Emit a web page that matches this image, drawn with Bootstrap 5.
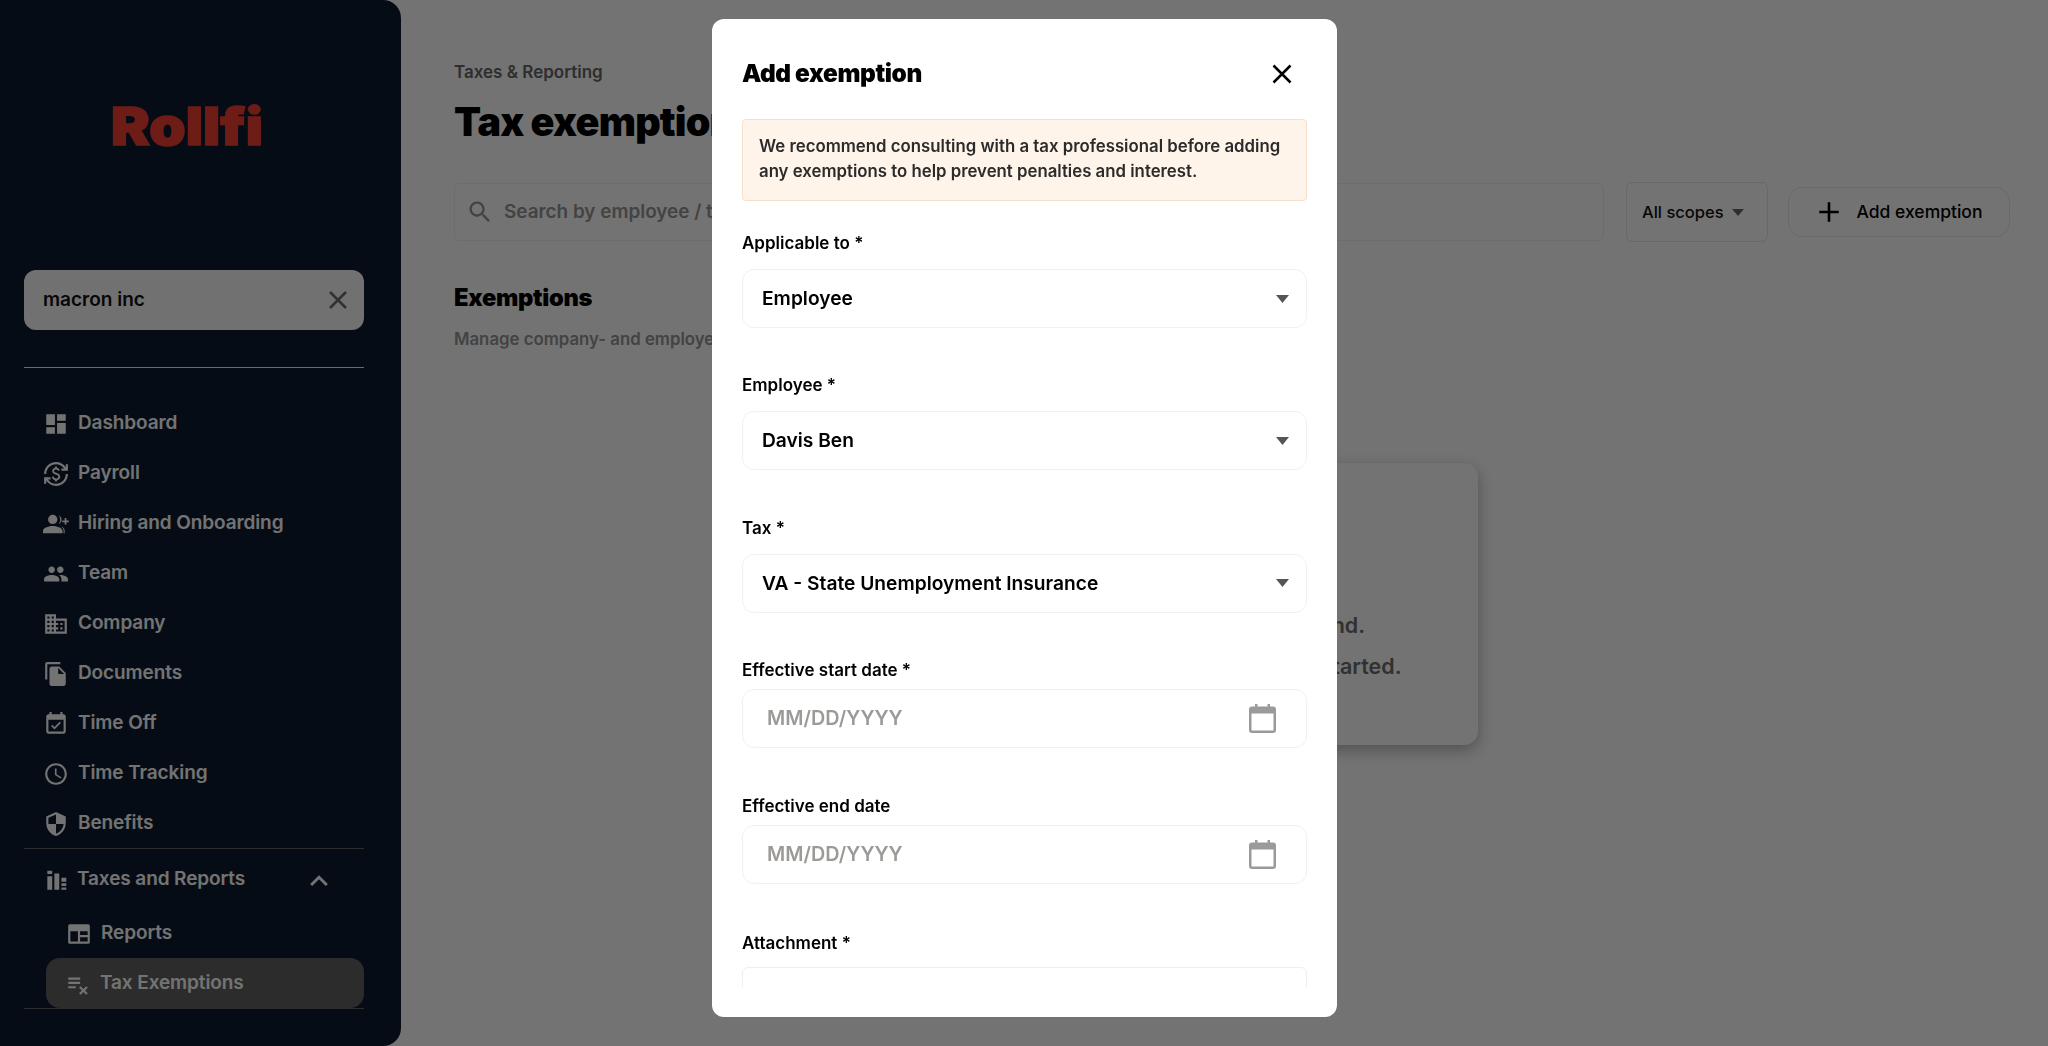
<!DOCTYPE html>
<html lang="en">
<head>
  <meta charset="UTF-8" />
  <title>Tax exemptions</title>
  <link href="https://cdn.jsdelivr.net/npm/bootstrap@5.3.0/dist/css/bootstrap.min.css" rel="stylesheet">
  <style>
    html, body { height: 100%; overflow: hidden; }
    body { font-family: Inter, "Liberation Sans", sans-serif; background: #fff; color: #000; }

    /* sidebar */
    .side-panel { width: 401px; height: 1046px; flex: none; background: #0f1c30; border-radius: 0 18px 18px 0; padding: 0 37px 0 24px; }
    .side-logo { height: 270px; padding: 96px 0 0 87px; }
    .side-logo svg { display: block; overflow: visible; }
    .company-box { height: 60px; background: #fbfbfb; border-radius: 12px; padding: 0 16px 0 19px; font-size: 19px; font-weight: 600; color: #111; }
    .side-rule { height: 1px; background: #ececec; margin: 37px 0 30px; }
    .side-link { height: 50px; padding-left: 20px; padding-top: 1px; gap: 9px; font-size: 19px; font-weight: 600; color: #fff; letter-spacing: -.1px; }
    .side-link svg { width: 26px; height: 26px; fill: #fff; flex: none; margin-left: -1px; }
    .side-split { border-top: 1px solid #626262; }
    .side-group { height: 60px; padding: 2px 32px 0 20px; }
    .side-sub { padding-left: 42px; gap: 9px; }
    .side-sub svg { margin-left: 0; }
    .side-active { background: #626262; border-radius: 14px; margin-left: 22px; padding-left: 20px; height: 50px; gap: 9px; }
    .side-end { border-top: 1px solid #626262; }

    /* page behind the dialog */
    .page-area { padding: 60px 38px 0 53px; min-width: 0; }
    .crumb { font-size: 17px; font-weight: 600; color: #666; line-height: 24px; }
    .page-title { font-size: 39.5px; font-weight: 900; line-height: 50px; margin: 13px 0 35px; letter-spacing: -.8px; }
    .search-box { height: 58px; border: 1px solid #f0f0f0; border-radius: 6px; padding-left: 11px; gap: 10px; font-size: 18.9px; font-weight: 600; color: #969696; }
    .search-box svg { width: 28px; height: 28px; fill: #969696; }
    .scope-box { width: 142px; height: 60px; border: 1px solid #e6e6e6; border-radius: 6px; margin-left: 22px; padding-left: 15px; gap: 8px; font-size: 16.5px; font-weight: 500; color: #111; }
    .add-btn { width: 222px; height: 50px; margin-left: 20px; border: 1px solid #e8e8e8; border-radius: 14px; gap: 15px; font-size: 17.5px; font-weight: 500; color: #000; background: #fff; padding: 0; }
    .add-btn svg { width: 26px; height: 26px; }
    .caret-down { width: 0; height: 0; border-left: 6px solid transparent; border-right: 6px solid transparent; border-top: 7px solid #666; }
    .section-title { font-size: 23.7px; font-weight: 900; line-height: 32px; margin: 40px 0 13px; letter-spacing: -.3px; }
    .section-sub { font-size: 16.8px; font-weight: 600; color: #949494; line-height: 24px; }
    .empty-card { width: 492px; height: 282px; margin: 112px 0 0 532px; border-radius: 14px; background: #fff; box-shadow: 0 5px 16px rgba(0,0,0,.3); padding-top: 142px; font-size: 21.5px; font-weight: 600; color: #6e6e6e; line-height: 41px; text-align: center; }

    /* dialog */
    .modal-backdrop { --bs-backdrop-opacity: .55; }
    .modal-dialog { --bs-modal-width: 625px; margin-top: 19px; margin-bottom: 0; margin-left: 712px; }
    .modal-content { height: 998px; border: 0; border-radius: 12px; overflow: hidden; }
    .modal-header { border: 0; padding: 36px 30px 0; height: 100px; align-items: flex-start; }
    .modal-title { font-size: 24.4px; font-weight: 900; line-height: 36px; letter-spacing: -.4px; }
    .close-x { background: none; border: 0; padding: 0 0 2px; width: 30px; height: 36px; margin-right: 10px; }
    .modal-body { padding: 0 30px; height: 868px; flex: none; overflow: hidden; }
    .note-box { height: 82px; background: #fff4ea; border: 1px solid #f6e0cd; border-radius: 4px; padding: 14px 16px; font-size: 16.8px; font-weight: 600; line-height: 25px; color: #2b2b2b; margin-bottom: 29px; }
    .field-label { display: block; font-size: 17px; font-weight: 600; line-height: 26px; color: #000; margin: 0 0 13px; }
    .field-select { height: 59px; border: 1px solid #f1f1f1; border-radius: 12px; padding: 0 19px; font-size: 19.2px; font-weight: 600; color: #000; margin-bottom: 44.400px; background-image: url("data:image/svg+xml,%3Csvg xmlns='http://www.w3.org/2000/svg' viewBox='0 0 13 8'%3E%3Cpath fill='%23555' d='M0 0h13L6.500 8z'/%3E%3C/svg%3E"); background-size: 13px 8px; background-position: right 17px center; }
    .date-label { margin-bottom: 6px; }
    .attach-label { margin-bottom: 11px; }
    .date-box { height: 59px; border: 1px solid #f1f1f1; border-radius: 12px; padding: 0 30px 0 24px; margin-bottom: 45.300px; }
    .date-box input { border: 0; outline: 0; padding: 0; flex: 1; min-width: 0; font-size: 19.8px; font-weight: 600; }
    .date-box input::placeholder { color: #9c9a97; }
    .date-box svg { width: 27px; height: 29px; }
    .file-box { height: 70px; border: 1px solid #efefef; border-radius: 6px 6px 0 0; }
  </style>
</head>
<body>
  <div class="d-flex">
    <aside class="side-panel">
      <div class="side-logo">
        <svg width="160" height="60" viewBox="0 0 160 60"><text x="0" y="49" textLength="152" lengthAdjust="spacingAndGlyphs" font-family="Inter, sans-serif" font-weight="900" font-size="52" fill="#f43e32" stroke="#f43e32" stroke-width="1.500">Rollfi</text></svg>
      </div>
      <div class="company-box d-flex align-items-center justify-content-between">
        <span>macron inc</span>
        <svg width="20" height="20" viewBox="0 0 20 20"><path d="M2 2l16 16M18 2L2 18" stroke="#707070" stroke-width="2.600" fill="none"/></svg>
      </div>
      <div class="side-rule"></div>
      <nav class="d-flex flex-column">
        <div class="side-link d-flex align-items-center"><svg viewBox="0 0 24 24"><path d="M3 13h8V3H3v10zm0 8h8v-6H3v6zm10 0h8V11h-8v10zm0-18v6h8V3h-8z"/></svg>Dashboard</div>
        <div class="side-link d-flex align-items-center"><svg viewBox="0 0 24 24"><path d="M12.890 11.100c-1.780-.590-2.640-.960-2.640-1.900 0-1.020 1.110-1.390 1.810-1.390 1.310 0 1.790.990 1.900 1.340l1.580-.670c-.150-.440-.820-1.910-2.640-2.230V5h-1.750v1.260c-2.600.560-2.620 2.850-2.620 2.960 0 2.270 2.250 2.910 3.350 3.310 1.580.560 2.280 1.070 2.280 2.030 0 1.130-1.050 1.610-1.980 1.610-1.820 0-2.340-1.870-2.400-2.090l-1.660.670c.630 2.190 2.280 2.780 3.020 2.960V19h1.750v-1.240c.520-.090 3.020-.590 3.020-3.220.010-1.390-.600-2.610-3.020-3.440zM3 21H1v-6h6v2H4.520c1.610 2.410 4.360 4 7.480 4 4.970 0 9-4.030 9-9h2c0 6.080-4.920 11-11 11-3.720 0-7.010-1.850-9-4.670V21zm-2-9C1 5.920 5.920 1 12 1c3.720 0 7.010 1.850 9 4.670V3h2v6h-6V7h2.480C17.870 4.590 15.120 3 12 3c-4.970 0-9 4.030-9 9H1z"/></svg>Payroll</div>
        <div class="side-link d-flex align-items-center"><svg viewBox="0 0 24 24"><path d="M9 3.500a4.300 4.300 0 110 8.600 4.300 4.300 0 010-8.600zM0 20.500v-2.300c0-3 6-4.400 9-4.400s9 1.400 9 4.400v2.300zM14.500 4.200a4.200 4.200 0 010 7.800c.9-1 1.400-2.400 1.400-3.900s-.5-2.900-1.400-3.900zM16.800 14.200c2.200.7 3.200 2.100 3.200 4v2.300h-1v-2.300c0-1.600-.9-3-2.200-4zM20 6.500v2.200h-2.200v1.600H20v2.200h1.600v-2.200h2.200V8.700h-2.200V6.500z"/></svg>Hiring and Onboarding</div>
        <div class="side-link d-flex align-items-center"><svg viewBox="0 0 24 24"><path d="M16 11c1.660 0 2.990-1.340 2.990-3S17.660 5 16 5c-1.660 0-3 1.340-3 3s1.340 3 3 3zm-8 0c1.660 0 2.990-1.340 2.990-3S9.660 5 8 5C6.340 5 5 6.340 5 8s1.340 3 3 3zm0 2c-2.330 0-7 1.170-7 3.500V19h14v-2.500c0-2.330-4.670-3.500-7-3.500zm8 0c-.290 0-.620.020-.970.050 1.160.840 1.970 1.970 1.970 3.450V19h6v-2.500c0-2.330-4.670-3.500-7-3.500z"/></svg>Team</div>
        <div class="side-link d-flex align-items-center"><svg viewBox="0 0 24 24"><path d="M12 7V3H2v18h20V7H12zM6 19H4v-2h2v2zm0-4H4v-2h2v2zm0-4H4V9h2v2zm0-4H4V5h2v2zm4 12H8v-2h2v2zm0-4H8v-2h2v2zm0-4H8V9h2v2zm0-4H8V5h2v2zm10 12h-8v-2h2v-2h-2v-2h2v-2h-2V9h8v10zm-2-8h-2v2h2v-2zm0 4h-2v2h2v-2z"/></svg>Company</div>
        <div class="side-link d-flex align-items-center"><svg viewBox="0 0 24 24"><path d="M16 1H4c-1.100 0-2 .900-2 2v14h2V3h12V1zm-1 4l6 6v10c0 1.100-.900 2-2 2H7.990C6.890 23 6 22.100 6 21l.010-14c0-1.100.890-2 1.990-2h7zm-1 7h5.500L14 6.500V12z"/></svg>Documents</div>
        <div class="side-link d-flex align-items-center"><svg viewBox="0 0 24 24"><path d="M16.530 11.060L15.470 10l-4.880 4.880-2.120-2.120-1.060 1.060L10.590 17l5.940-5.940zM19 3h-1V1h-2v2H8V1H6v2H5c-1.110 0-1.990.900-1.990 2L3 19c0 1.100.890 2 2 2h14c1.100 0 2-.900 2-2V5c0-1.100-.900-2-2-2zm0 16H5V8h14v11z"/></svg>Time Off</div>
        <div class="side-link d-flex align-items-center"><svg viewBox="0 0 24 24"><path d="M11.990 2C6.470 2 2 6.480 2 12s4.470 10 9.990 10C17.520 22 22 17.520 22 12S17.520 2 11.990 2zM12 20c-4.420 0-8-3.580-8-8s3.580-8 8-8 8 3.580 8 8-3.580 8-8 8zm.500-13H11v6l5.250 3.150.750-1.230-4.500-2.670z"/></svg>Time Tracking</div>
        <div class="side-link d-flex align-items-center"><svg viewBox="0 0 24 24"><path d="M12 1L3 5v6c0 5.550 3.840 10.740 9 12 5.160-1.260 9-6.450 9-12V5l-9-4zm0 10.990h7c-.530 4.120-3.280 7.790-7 8.940V12H5V6.300l7-3.110v8.800z"/></svg>Benefits</div>
        <div class="side-split side-link side-group d-flex align-items-center justify-content-between">
          <span class="d-flex align-items-center gap-2"><svg viewBox="0 0 24 24"><path d="M4 3.500h4.500v3H4zM4 8.500h4.500V21H4zM10.500 6h4.500v15h-4.500zM17 10h4.500v3.500H17zM17 15h4.500v2.500H17zM17 19h4.500v2H17z"/></svg>Taxes and Reports</span>
          <svg viewBox="0 0 24 24"><path d="M12 7.500l-8.200 8.200 1.900 1.900L12 11.300l6.300 6.300 1.900-1.900z"/></svg>
        </div>
        <div class="side-link side-sub d-flex align-items-center"><svg viewBox="0 0 24 24"><path fill-rule="evenodd" d="M3.500 3h17A1.500 1.500 0 0122 4.500v15a1.500 1.500 0 01-1.500 1.500h-17A1.500 1.500 0 012 19.500v-15A1.500 1.500 0 013.500 3zM4 9.500V19h7V9.500zm9 0V13h7V9.500zm0 5.500v4h7v-4z"/></svg>Reports</div>
        <div class="side-link side-active d-flex align-items-center"><svg viewBox="0 0 24 24"><path d="M14 10H3v2h11v-2zm0-4H3v2h11V6zM3 16h7v-2H3v2zm11.410 6L17 19.410 19.590 22 21 20.590 18.410 18 21 15.410 19.590 14 17 16.590 14.410 14 13 15.410 15.590 18 13 20.590 14.410 22z"/></svg>Tax Exemptions</div>
        <div class="side-end"></div>
      </nav>
    </aside>

    <main class="page-area flex-grow-1">
      <div class="crumb">Taxes &amp; Reporting</div>
      <h1 class="page-title">Tax exemptions</h1>
      <div class="d-flex align-items-center">
        <div class="search-box d-flex align-items-center flex-grow-1">
          <svg viewBox="0 0 24 24"><path d="M15.500 14h-.790l-.280-.270C15.410 12.590 16 11.110 16 9.500 16 5.910 13.090 3 9.500 3S3 5.910 3 9.500 5.910 16 9.500 16c1.610 0 3.090-.590 4.230-1.570l.270.280v.790l5 4.990L20.490 19l-4.990-5zm-6 0C7.010 14 5 11.990 5 9.500S7.010 5 9.500 5 14 7.010 14 9.500 11.990 14 9.500 14z"/></svg>
          <span>Search by employee / tax</span>
        </div>
        <div class="scope-box d-flex align-items-center">All scopes <span class="caret-down"></span></div>
        <button class="add-btn btn d-flex align-items-center justify-content-center" type="button">
          <svg viewBox="0 0 24 24"><path d="M12 3v18M3 12h18" stroke="#000" stroke-width="2.400" fill="none"/></svg>Add exemption
        </button>
      </div>
      <h2 class="section-title">Exemptions</h2>
      <div class="section-sub">Manage company- and employee-level tax exemptions.</div>
      <div class="empty-card">No tax exemptions found.<br>Add an exemption to get started.</div>
    </main>
  </div>

  <div class="modal-backdrop fade show"></div>
  <div class="modal fade show d-block" tabindex="-1">
    <div class="modal-dialog">
      <div class="modal-content">
        <div class="modal-header justify-content-between">
          <h5 class="modal-title">Add exemption</h5>
          <button class="close-x" type="button" aria-label="Close">
            <svg width="20" height="20" viewBox="0 0 20 20"><path d="M1.500 1.500l17 17M18.500 1.500l-17 17" stroke="#000" stroke-width="2.500" fill="none"/></svg>
          </button>
        </div>
        <div class="modal-body">
          <div class="note-box">We recommend consulting with a tax professional before adding any exemptions to help prevent penalties and interest.</div>
          <label class="field-label">Applicable to *</label>
          <select class="form-select field-select"><option>Employee</option></select>
          <label class="field-label">Employee *</label>
          <select class="form-select field-select"><option>Davis Ben</option></select>
          <label class="field-label">Tax *</label>
          <select class="form-select field-select"><option>VA - State Unemployment Insurance</option></select>
          <label class="field-label date-label">Effective start date *</label>
          <div class="date-box d-flex align-items-center">
            <input type="text" placeholder="MM/DD/YYYY">
            <svg viewBox="0 0 27 29"><path fill="#9a9a9a" fill-rule="evenodd" d="M6 0h2.500v2.500h10V0H21v2.500h3a3 3 0 013 3V26a3 3 0 01-3 3H3a3 3 0 01-3-3V5.500a3 3 0 013-3h3zM2.500 9.500V26a.5.5 0 00.5.500h21a.5.5 0 00.5-.5V9.500z"/></svg>
          </div>
          <label class="field-label date-label">Effective end date</label>
          <div class="date-box d-flex align-items-center">
            <input type="text" placeholder="MM/DD/YYYY">
            <svg viewBox="0 0 27 29"><path fill="#9a9a9a" fill-rule="evenodd" d="M6 0h2.500v2.500h10V0H21v2.500h3a3 3 0 013 3V26a3 3 0 01-3 3H3a3 3 0 01-3-3V5.500a3 3 0 013-3h3zM2.500 9.500V26a.5.5 0 00.5.500h21a.5.5 0 00.5-.5V9.500z"/></svg>
          </div>
          <label class="field-label attach-label">Attachment *</label>
          <div class="file-box"></div>
        </div>
      </div>
    </div>
  </div>
  <script src="https://cdn.jsdelivr.net/npm/bootstrap@5.3.0/dist/js/bootstrap.bundle.min.js"></script>
</body>
</html>
